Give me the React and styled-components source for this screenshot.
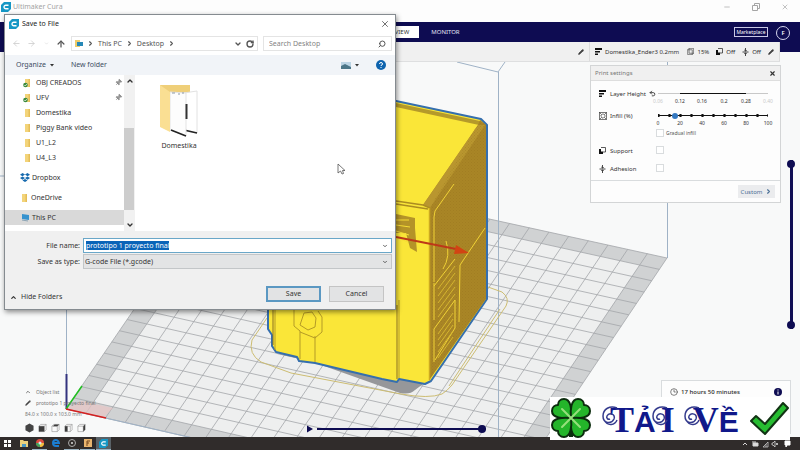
import React, { useEffect, useRef } from "react";
import styled, { createGlobalStyle, css } from "styled-components";
import {
  ArrowLeft, ArrowRight, ArrowUp, ChevronRight, ChevronDown, ChevronUp, RotateCw,
  Search, X, Minus, Pencil, Undo2, Clock3, Pin,
} from "lucide-react";

const navy = "#0e0c52";
const uiFont = '"Noto Sans", "Open Sans", sans-serif';

const GlobalStyle = createGlobalStyle`
  * { box-sizing: border-box; }
  body { margin: 0; background: #f8f9f9; font-family: ${uiFont}; color: #333; }
  button, input, select { font: inherit; color: inherit; margin: 0; padding: 0; }
  button { cursor: pointer; }
  svg { display: block; flex: none; }
`;

const Page = styled.div`
  position: relative;
  display: flex;
  flex-direction: column;
  min-height: 100vh;
  overflow: hidden;
  font-size: 6px;
  line-height: 8px;
`;

/* ---------- application window ---------- */
const TitleBar = styled.header`
  display: flex;
  align-items: flex-start;
  gap: 2px;
  height: 22px;
  padding: 2px 9px 0 1px;
  background: #fdfdfd;
  color: #a3a3a3;
  font-size: 7px;
  line-height: 10px;
`;
const AppName = styled.span`flex: 1;`;
const WindowButton = styled.button`
  width: 10px;
  height: 10px;
  margin-left: 17px;
  border: 0;
  background: none;
  color: #a5a5a5;
`;
const NavBar = styled.nav`
  display: flex;
  align-items: flex-start;
  justify-content: flex-end;
  height: 30px;
  padding: 4px 10px 0 0;
  background: ${navy};
`;
const Tabs = styled.div`
  flex: 1;
  display: flex;
  padding-left: 374px;
  gap: 12px;
`;
const Tab = styled.button`
  height: 12px;
  padding: 0 ${(p) => (p.$active ? "10px" : "0")};
  border: 0;
  background: ${(p) => (p.$active ? "#fff" : "none")};
  color: ${(p) => (p.$active ? "#333" : "#e4e4f4")};
`;
const MarketButton = styled.button`
  height: 10px;
  margin: 1px 8px 0 0;
  width: 34px;
  border: 1px solid #c9c9e6;
  background: none;
  color: #fff;
  font-size: 5px;
  line-height: 8px;
`;
const Avatar = styled.button`
  width: 14px;
  height: 14px;
  border: 1px solid #d6d6ee;
  border-radius: 50%;
  background: none;
  color: #fff;
  font-weight: 600;
`;
const StageBar = styled.div`
  display: grid;
  grid-template-columns: 1fr 190px;
  height: 20px;
  margin: -10px 20px 0 4px;
  background: #f0f0f0;
  border-bottom: 1px solid #dedfe0;
`;
const StagePart = styled.div`
  display: flex;
  align-items: center;
  justify-content: flex-end;
  padding: 0 5px;
  border-right: 1px solid #dcdcdc;
`;
const Profile = styled.span`flex: 1; padding-left: 3px; white-space: nowrap;`;
const Stat = styled.span`
  display: flex;
  align-items: center;
  gap: 3px;
  margin-right: 7px;
  white-space: nowrap;
`;

/* ---------- workspace ---------- */
const Workspace = styled.main`
  position: relative;
  flex: 1;
  display: flex;
  flex-direction: column;
  justify-content: flex-end;
`;
const Scene = styled.svg`
  position: absolute;
  inset: 0;
  width: 100%;
  height: 100%;
`;
const Settings = styled.section`
  position: absolute;
  top: 3px;
  right: 19px;
  width: 191px;
  background: #fdfdfd;
  border: 1px solid #d3d5d6;
`;
const SettingsHead = styled.div`
  display: flex;
  justify-content: space-between;
  align-items: center;
  height: 15px;
  padding: 0 4px;
  background: #f0f0f0;
  border-bottom: 1px solid #dedede;
  color: #777;
`;
const IconButton = styled.button`
  display: grid;
  place-items: center;
  border: 0;
  background: none;
`;
const SettingsBody = styled.div`
  display: flex;
  flex-direction: column;
  padding: 8px 8px 6px;
`;
const SettingRow = styled.div`
  display: grid;
  grid-template-columns: 11px 46px 1fr;
  align-items: start;
  min-height: ${(p) => p.$h}px;
`;
const SettingLabel = styled.label`
  display: flex;
  align-items: center;
  gap: 3px;
  height: 9px;
  white-space: nowrap;
`;
const SettingIcon = styled.span`
  display: flex;
  align-items: center;
  height: 9px;
`;
const SliderBox = styled.div`
  display: flex;
  flex-direction: column;
  width: 114px;
`;
const Range = styled.input`
  appearance: none;
  width: 110px;
  height: 9px;
  margin: 0 2px;
  background:
    radial-gradient(circle at center, ${(p) => (p.$dots ? "#111" : "transparent")} 1px, transparent 2px) -5px 0 / 11px 9px,
    linear-gradient(${(p) => p.$line}) center / 100% 1px no-repeat;
  &::-webkit-slider-thumb {
    appearance: none;
    width: 6px;
    height: 6px;
    border-radius: 50%;
    background: ${(p) => p.$thumb};
  }
`;
const Ticks = styled.div`
  display: flex;
  justify-content: space-between;
  height: 8px;
  margin: 0 -4px;
  font-size: 5px;
  line-height: 6px;
  span { width: 12px; text-align: center; }
`;
const Faint = styled.span`color: #c9c9c9;`;
const CheckLabel = styled.label`
  display: flex;
  align-items: center;
  gap: 2px;
  height: 9px;
  font-size: 5px;
  color: #555;
`;
const Check = styled.input`
  appearance: none;
  width: 8px;
  height: 8px;
  border: 1px solid #d9dcde;
  background: #fff;
`;
const SettingsFoot = styled.div`
  display: flex;
  justify-content: flex-end;
  padding: 4px 5px;
  border-top: 1px solid #d9dcde;
`;
const CustomButton = styled.button`
  display: flex;
  align-items: center;
  justify-content: center;
  gap: 3px;
  width: 37px;
  height: 13px;
  border: 0;
  background: #ebecee;
  color: #4c7197;
`;
const LayerSlider = styled.div`
  position: absolute;
  top: 98px;
  right: 5px;
  display: flex;
  input {
    appearance: none;
    writing-mode: vertical-lr;
    direction: rtl;
    width: 8px;
    height: 169px;
    background: linear-gradient(${navy}, ${navy}) center / 3px 100% no-repeat;
  }
  input::-webkit-slider-thumb {
    appearance: none;
    width: 8px;
    height: 8px;
    border-radius: 50%;
    background: ${navy};
  }
  &::after {
    content: "";
    position: absolute;
    bottom: 0;
    width: 8px;
    height: 8px;
    border-radius: 50%;
    background: ${navy};
  }
`;
const ObjectInfo = styled.div`
  position: relative;
  display: flex;
  flex-direction: column;
  gap: 3px;
  padding: 0 0 4px 25px;
  color: #777;
  font-size: 5px;
`;
const InfoLine = styled.div`
  display: flex;
  align-items: center;
  gap: ${(p) => p.$gap || 5}px;
  height: 8px;
`;
const ViewIcons = styled(InfoLine)`
  height: 10px;
  margin-top: 2px;
`;
const PlayBar = styled.div`
  position: absolute;
  left: 306px;
  bottom: 4px;
  display: flex;
  align-items: center;
  gap: 4px;
  width: 180px;
  input {
    appearance: none;
    flex: 1;
    height: 8px;
    background: linear-gradient(${navy}, ${navy}) center / 100% 2px no-repeat;
  }
  input::-webkit-slider-thumb {
    appearance: none;
    width: 8px;
    height: 8px;
    border-radius: 50%;
    background: ${navy};
  }
`;
const TimeCard = styled.section`
  position: absolute;
  right: 9px;
  bottom: 3px;
  display: flex;
  align-items: flex-start;
  gap: 3px;
  width: 130px;
  height: 54px;
  padding: 7px 8px;
  background: #fdfdfd;
  border: 1px solid #d9dcde;
`;
const TimeText = styled.strong`
  flex: 1;
  font-family: "Open Sans", sans-serif;
  font-weight: 600;
`;

/* ---------- save dialog ---------- */
const Dialog = styled.form`
  position: absolute;
  top: 14px;
  left: 4px;
  width: 392px;
  border: 1px solid #858b90;
  background: #fff;
  box-shadow: 1px 2px 5px rgba(0, 0, 0, 0.45);
  font-size: 7px;
  line-height: 10px;
  color: #333;
`;
const DialogTitle = styled.div`
  display: flex;
  align-items: center;
  gap: 3px;
  height: 18px;
  padding: 0 5px 0 4px;
  h1 { flex: 1; margin: 0; font-size: 7px; font-weight: 400; color: #222; }
`;
const PathRow = styled.div`
  display: flex;
  align-items: center;
  gap: 5px;
  height: 22px;
  padding: 0 3px 1px 6px;
  color: #555;
`;
const ArrowButton = styled(IconButton)`
  width: 10px;
  color: ${(p) => (p.$dim ? "#c8c8c8" : "#555")};
`;
const Address = styled.div`
  flex: 1;
  display: flex;
  align-items: center;
  gap: 4px;
  height: 15px;
  padding: 0 3px;
  border: 1px solid #e4e4e4;
`;
const Spacer = styled.span`flex: 1;`;
const SearchBox = styled.label`
  display: flex;
  align-items: center;
  width: 129px;
  height: 15px;
  padding: 0 5px;
  border: 1px solid #e4e4e4;
  input { flex: 1; min-width: 0; border: 0; outline: 0; background: none; }
  input::placeholder { color: #838383; opacity: 1; }
`;
const ToolRow = styled.div`
  display: flex;
  align-items: center;
  gap: 17px;
  height: 20px;
  padding: 0 9px 0 11px;
  background: #f1f4f8;
  color: #3c4c63;
`;
const TextButton = styled.button`
  display: flex;
  align-items: center;
  gap: 4px;
  border: 0;
  background: none;
`;
const Browser = styled.div`
  display: grid;
  grid-template-columns: 119px 11px 1fr;
  height: 156px;
`;
const Tree = styled.ul`
  margin: 0;
  padding: 0;
  list-style: none;
`;
const TreeItem = styled.li`
  display: flex;
  align-items: center;
  gap: ${(p) => (p.$top ? 2 : 4)}px;
  height: 15px;
  padding-left: ${(p) => (p.$top ? 15 : 18)}px;
  padding-right: 2px;
  margin-top: ${(p) => (p.$top ? 5 : 0)}px;
  white-space: nowrap;
  ${(p) => p.$selected && css`background: #d9d9d9;`}
  span { flex: 1; }
`;
const ScrollBar = styled.div`
  display: flex;
  flex-direction: column;
  align-items: center;
  justify-content: space-between;
  padding: 2px 0;
  background: linear-gradient(#cdcdcd, #cdcdcd) 0 53px / 10px 82px no-repeat #f1f1f1;
`;
const Files = styled.div`padding: 9px 21px;`;
const FileTile = styled.figure`
  display: flex;
  flex-direction: column;
  align-items: center;
  gap: 3px;
  width: 46px;
  margin: 0;
`;
const DialogFoot = styled.div`
  padding: 7px 3px 7px 0;
  background: #f0f0f0;
`;
const Fields = styled.div`
  display: grid;
  grid-template-columns: 75px 1fr;
  column-gap: 3px;
  label { text-align: right; line-height: 16px; }
`;
const Combo = styled.div`
  display: flex;
  align-items: center;
  height: 15px;
  padding: 0 3px 0 2px;
  border: 1px solid ${(p) => (p.$focus ? "#6aa7c8" : "#c3c6c8")};
  background: ${(p) => (p.$focus ? "#fff" : "#e3e4e5")};
  input, select {
    flex: 1;
    min-width: 0;
    height: 12px;
    border: 0;
    outline: 0;
    background: none;
    appearance: none;
  }
  select { padding-left: 0; margin-left: -1px; }
  input::selection { background: #0a64b8; color: #fff; }
`;
const Actions = styled.div`
  display: flex;
  align-items: flex-end;
  gap: 8px;
  margin-top: 16px;
  padding: 0 8px 0 5px;
`;
const DialogButton = styled.button`
  width: 55px;
  height: 16px;
  border: ${(p) => (p.$primary ? "2px solid #5b98c2" : "1px solid #c4c4c4")};
  background: #e2e3e4;
  line-height: 10px;
`;
const Cursor = styled.svg`
  position: absolute;
  left: 337px;
  top: 163px;
`;

/* ---------- taskbar and banner ---------- */
const TaskBar = styled.footer`
  display: flex;
  align-items: center;
  gap: 1px;
  height: 13px;
  background: #302c2b;
  padding-right: 9px;
`;
const Task = styled.button`
  display: grid;
  place-items: center;
  width: 15px;
  height: 13px;
  border: 0;
  border-bottom: 1px solid ${(p) => (p.$open ? "#9ab4c4" : "transparent")};
  background: ${(p) => (p.$active ? "#596166" : "none")};
`;
const Banner = styled.div`
  position: absolute;
  right: 10px;
  bottom: 10px;
  display: flex;
  align-items: center;
  justify-content: space-between;
  width: 240px;
  height: 43px;
  padding: 0 1px;
  background: #fff;
`;
const BannerText = styled.div`
  position: relative;
  display: flex;
  align-items: baseline;
  gap: 18px;
  flex: 1;
  min-width: 0;
  padding: 4px 0 0 19px;
  color: #10188a;
  font: bold 30px/40px "Liberation Sans", sans-serif;
  b { font: bold 36px/40px "Liberation Serif", serif; }
`;
const Word = styled.span`
  display: flex;
  align-items: baseline;
  i { width: 5px; }
`;
const Swash = styled.svg`
  position: absolute;
  left: 10px;
  top: 4px;
`;

/* ---------- drawings ---------- */
function CuraLogo({ size = 10 }) {
  return (
    <svg width={size} height={size} viewBox="0 0 20 20">
      <path d="M6 0h14v14l-6 6H0V6z" fill="#1597c5" />
      <path d="M15 6.500H9.500a3.500 3.500 0 0 0 0 7H15" fill="none" stroke="#fff" strokeWidth="2.600" />
    </svg>
  );
}
function LayersIcon() {
  return <svg width="7" height="7" viewBox="0 0 7 7"><path d="M0 0h7v2H0zM0 3h5v1.500H0zM0 5.500h3V7H0z" fill="#111" /></svg>;
}
function InfillIcon({ size = 8, crossed = true }) {
  return (
    <svg width={size} height={size} viewBox="0 0 10 10" fill="none" stroke="#444" strokeWidth="0.900">
      {crossed
        ? <><rect x="0.500" y="0.500" width="9" height="9" /><path d="M.5.5l3 3M9.500.5l-3 3M.5 9.500l3-3M9.500 9.500l-3-3M5 2l3 3-3 3-3-3z" /></>
        : <path d="M1 2.500h6.500V9.500H1zM1 2.500L3 .5h6.500v7l-2 2M3 .5v7M3 7.500h6.500" />}
    </svg>
  );
}
function SupportIcon() {
  return (
    <svg width="7" height="7" viewBox="0 0 7 7">
      <path d="M2 .5h4.500V5H4" fill="none" stroke="#333" strokeWidth=".8" />
      <path d="M0 2h2v2.500h2V7H0z" fill="#111" />
    </svg>
  );
}
function AdhesionIcon() {
  return <svg width="7" height="8" viewBox="0 0 7 8" fill="none" stroke="#333" strokeWidth=".9"><path d="M3.500 0v3M2.300 2l1.200 1.200L4.700 2M.5 4h6M3.500 8V5M2.300 6l1.200-1.200L4.700 6" /></svg>;
}
function FolderIcon({ synced }) {
  return (
    <svg width="9" height="10" viewBox="0 0 9 10">
      <path d="M2 1h5v8H2z" fill="#f3d47a" /><path d="M5.500 1H7v8H5.500z" fill="#e5bd58" />
      {synced && <><circle cx="2.500" cy="7" r="2.300" fill="#3a8a3c" /><path d="M1.300 7l1 1 1.500-2" stroke="#fff" strokeWidth=".7" fill="none" /></>}
    </svg>
  );
}
function DropboxIcon() {
  return <svg width="10" height="9" viewBox="0 0 20 18"><path d="M5 0l5 3-5 3.500L0 3.500zM15 0l5 3.500-5 3L10 3zM5 7l5 3-5 3.500L0 10zM15 7l5 3-5 3.500L10 10zM10 12l5 3-5 3-5-3z" fill="#176aae" /></svg>;
}
function PcIcon() {
  return <svg width="10" height="9" viewBox="0 0 10 9"><path d="M2 1l7 1v5L2 6z" fill="#3793ce" /><path d="M2 7l6 1" stroke="#8ba4b5" /></svg>;
}
function OpenFolder() {
  return (
    <svg width="42" height="54" viewBox="0 0 42 54">
      <path d="M2 1h30v40H2z" fill="#efcf79" />
      <path d="M19 10l20-3v42l-18-3z" fill="#fff" stroke="#e2e2e2" />
      <path d="M26 46l13 3" stroke="#222" strokeWidth="1.500" />
      <path d="M12 8l16 1v43l-16-6z" fill="#fdfdfd" stroke="#e3e3e3" />
      <path d="M13 46l15 6" stroke="#222" strokeWidth="1.500" />
      <path d="M28.500 20v15" stroke="#333" strokeWidth="2" />
      <path d="M14 9h3M20 10h2M24 9h2" stroke="#8d99a5" />
      <path d="M2 1l10 7v40L2 43z" fill="#fadf93" />
    </svg>
  );
}
function CubeIcon({ side }) {
  const faces = { top: "M2 3l2-2h5L7 3z", left: "M1 3h3v6H1z", right: "M7 3l2-2v6L7 9z", front: "M1 3h6v6H1z" };
  return (
    <svg width="9" height="10" viewBox="0 0 10 10">
      {side === "all"
        ? <path d="M5 0l4.500 2.500v5L5 10 .5 7.500v-5z" fill="#444" />
        : <><path d="M1 3h6v6H1zM1 3l2-2h6v6L7 9M7 3l2-2" fill="#fafafa" stroke="#888" strokeWidth=".6" /><path d={faces[side]} fill="#3d3d3d" /></>}
    </svg>
  );
}

const plate = { left: [66, 409], back: [234, 163], right: [667, 258], front: [499, 508] };
const CELLS = 22;
function at(u, v) {
  const mix = (i) =>
    (1 - u) * (1 - v) * plate.left[i] + (1 - u) * v * plate.back[i] + u * (1 - v) * plate.front[i] + u * v * plate.right[i];
  return `${mix(0)} ${mix(1)}`;
}
function quad(a, b) {
  return `M${at(a, a)}L${at(a, b)}L${at(b, b)}L${at(b, a)}z`;
}
function gridPath() {
  let d = "";
  for (let i = 0; i <= CELLS; i += 1) {
    const t = i / CELLS;
    d += `M${at(t, 0)}L${at(t, 1)}M${at(0, t)}L${at(1, t)}`;
  }
  return d;
}

function PrintScene() {
  return (
    <Scene viewBox="0 62 800 375" preserveAspectRatio="xMidYMid slice" aria-hidden="true">
      <defs>
        <pattern id="weave" width="3" height="3" patternUnits="userSpaceOnUse">
          <path d="M0 0h1v1H0zM1.500 1.500h1v1h-1z" fill="#8f6d17" opacity=".3" />
        </pattern>
      </defs>
      <path d={quad(0, 1)} fill="#d0d2d3" />
      <path d={quad(1 / CELLS, 1 - 1 / CELLS)} fill="#eeefef" />
      <path d={gridPath()} stroke="#a3a6aa" strokeWidth=".8" fill="none" />
      <g fill="none" stroke="#9fb2c6" strokeWidth="1">
        <path d="M66.500 62V375M667.500 62V258M457 62l41 10 7-10M498.500 72V437M0 176h5" />
        <path d="M66 409L499 508" />
      </g>
      <path d="M66 409l38 8 9-9-32-7z" fill="#e8c4c4" opacity=".7" />
      <path d="M66.500 374v35" stroke="#33337e" strokeWidth="2" />
      <path d="M66 409l16-23" stroke="#20c020" strokeWidth="1.500" />
      <path d="M66 409l40 9" stroke="#d52020" strokeWidth="1.500" />
      <path d="M310 361l90 32q10 2 15-3l12-9-60-20-90-7z" fill="#96979a" />
      <g fill="none" stroke="#cdbd72" strokeWidth="1">
        <path d="M267 318l-15 22q-4 14 9 22l30 11 110 21q28 5 41 0 5-3 10-9l54-79q4-8-4-14l-14-5" />
        <path d="M449 386l51-77" />
      </g>
      <path d="M396 101l85 18 6 6v174l-56 82-6 3-26-5-2 3-15-3-67-16-16-2-2-4-21-5-4-6v-11l-4-6V101z" fill="#fae638" stroke="#356fae" strokeWidth="2" strokeLinejoin="round" />
      <path d="M396 103l84 18-1 4-83-18z" fill="#b59a2a" />
      <path d="M480 120l6 5v174l-56 80-1-172-6-2 55-80z" fill="#a98526" />
      <path d="M478 125l-55 80 7 3 55-83z" fill="#b9962f" />
      <path d="M480 120l6 5v174l-56 80V207z" fill="url(#weave)" />
      <path d="M396 201l27 4 7 3M396 204l32 5" stroke="#ac8c20" strokeWidth="1.500" fill="none" />
      <path d="M396 214l19 4v10l2 24-7-4-4-15h-10z" fill="#b49328" />
      <path d="M396 220h13M396 225l14 2M396 231l13 4M396 237l12 5" stroke="#f5dc35" strokeWidth="1" />
      <path d="M429.500 208V380" stroke="#cda920" strokeWidth="1.500" />
      <g fill="none" stroke="#f0d236" strokeWidth="1">
        <path d="M454 184l-19 27-1 6v65M446 241q5 15-3 28M485 228l-25 37-1 57M434 283v37M434 286l21-27M434 362v-33l21-29v28l-20 32" />
      </g>
      <g fill="none" stroke="#d5b52f" strokeWidth="1">
        <path d="M438 289l17-23M438 296l17-23M438 303l17-23M438 310l17-23M438 317l17-23M438 334l15-21M438 340l15-21M438 346l15-21M438 352l15-21M438 358l15-21" />
      </g>
      <g fill="none" stroke="#b49b26" strokeWidth="1">
        <path d="M275 309v41M399 300v78M300 331v28M315 336v26M294 309v17l6 5M318 311l4 6v15l-7 6-15-6" />
        <path d="M304 313l8-1 4 6-1 9-7 3-8-5z" />
      </g>
      <path d="M397 305v74M273 309v36" stroke="#897122" strokeWidth="1" />
      <path d="M396 237l60 12" stroke="#bd3818" strokeWidth="2" />
      <path d="M456 245l13 8-15 1z" fill="#d24413" />
    </Scene>
  );
}

function Clover() {
  return (
    <svg width="40" height="41" viewBox="0 0 40 41">
      <path d="M20 22v17" stroke="#0b2c0d" strokeWidth="4" />
      <g fill="#24b52a" stroke="#0b2c0d" strokeWidth="2" strokeLinejoin="round">
        {[0, 90, 180, 270].map((a) => (
          <path key={a} transform={`rotate(${a} 20 20)`} d="M20 20C12 21 1 20 1 13c0-4 3-6 6-6 0-3 2-6 6-6 7 0 8 11 7 19z" />
        ))}
      </g>
      <path d="M20 20L11 11M20 20l9-9M20 20l-9 9M20 20l9 9" stroke="#96e07c" strokeWidth="2" strokeLinecap="round" />
    </svg>
  );
}
function Flourishes() {
  const curl = "M15 5C8 2 1 6 1 13s8 9 11 3c2-5-5-7-7-3-1 2 1 4 3 3M2 17c4 7 11 5 13 0";
  return (
    <Swash width="126" height="36" viewBox="0 0 126 36" fill="none" stroke="#343b8d" strokeWidth="1.500">
      <path d={curl} transform="translate(1 3)" />
      <path d={curl} transform="translate(51 3)" />
      <path d={curl} transform="translate(83 3)" />
    </Swash>
  );
}
function BigCheck() {
  return <svg width="39" height="34" viewBox="0 0 39 34"><path d="M1 19l5-5 9 8L33 1l5 5-23 26z" fill="#27bd31" stroke="#123414" strokeWidth="2" strokeLinejoin="round" /></svg>;
}

/* ---------- sections ---------- */
function PrintSettings() {
  return (
    <Settings>
      <SettingsHead>Print settings<IconButton aria-label="Close settings"><X size={7} color="#333" strokeWidth={4} /></IconButton></SettingsHead>
      <SettingsBody>
        <SettingRow $h={22}>
          <SettingIcon><LayersIcon /></SettingIcon>
          <SettingLabel htmlFor="layer">Layer Height <Undo2 size={7} color="#333" strokeWidth={3} /></SettingLabel>
          <SliderBox>
            <Range id="layer" type="range" $line="to right, #c8c8c8 20%, #111 20%, #111 80%, #c8c8c8 80%" $thumb="transparent" />
            <Ticks><Faint>0.06</Faint><span>0.12</span><span>0.16</span><span>0.2</span><span>0.28</span><Faint>0.40</Faint></Ticks>
          </SliderBox>
        </SettingRow>
        <SettingRow $h={35}>
          <SettingIcon><InfillIcon /></SettingIcon>
          <SettingLabel htmlFor="infill">Infill (%)</SettingLabel>
          <SliderBox>
            <Range id="infill" type="range" defaultValue="13" $dots $line="#111, #111" $thumb="#3478c0" />
            <Ticks>{[0, 20, 40, 60, 80, 100].map((n) => <span key={n}>{n}</span>)}</Ticks>
            <CheckLabel><Check type="checkbox" />Gradual infill</CheckLabel>
          </SliderBox>
        </SettingRow>
        <SettingRow $h={18}>
          <SettingIcon><SupportIcon /></SettingIcon>
          <SettingLabel htmlFor="support">Support</SettingLabel>
          <SliderBox><Check id="support" type="checkbox" /></SliderBox>
        </SettingRow>
        <SettingRow $h={10}>
          <SettingIcon><AdhesionIcon /></SettingIcon>
          <SettingLabel htmlFor="adhesion">Adhesion</SettingLabel>
          <SliderBox><Check id="adhesion" type="checkbox" /></SliderBox>
        </SettingRow>
      </SettingsBody>
      <SettingsFoot><CustomButton>Custom <ChevronRight size={7} strokeWidth={4} /></CustomButton></SettingsFoot>
    </Settings>
  );
}

function SaveDialog() {
  const nameRef = useRef(null);
  useEffect(() => {
    nameRef.current.focus({ preventScroll: true });
    nameRef.current.select();
  }, []);
  return (
    <Dialog role="dialog" aria-label="Save to File" onSubmit={(e) => e.preventDefault()}>
      <DialogTitle>
        <CuraLogo /><h1>Save to File</h1>
        <IconButton type="button" aria-label="Close"><X size={10} color="#555" strokeWidth={2} /></IconButton>
      </DialogTitle>
      <PathRow>
        <ArrowButton type="button" $dim aria-label="Back"><ArrowLeft size={9} /></ArrowButton>
        <ArrowButton type="button" $dim aria-label="Forward"><ArrowRight size={9} /></ArrowButton>
        <ArrowButton type="button" $dim aria-label="Recent"><ChevronDown size={5} /></ArrowButton>
        <ArrowButton type="button" aria-label="Up"><ArrowUp size={10} strokeWidth={3} /></ArrowButton>
        <Address>
          <svg width="8" height="9" viewBox="0 0 8 9"><path d="M0 1h5v7H0z" fill="#edcc6c" /><path d="M2 3h6v4H2z" fill="#2688b7" /></svg>
          <ChevronRight size={7} strokeWidth={4} />This PC
          <ChevronRight size={7} strokeWidth={4} />Desktop
          <ChevronRight size={7} strokeWidth={4} /><Spacer />
          <ChevronDown size={8} strokeWidth={4} /><RotateCw size={8} strokeWidth={4} />
        </Address>
        <SearchBox><input aria-label="Search Desktop" placeholder="Search Desktop" /><Search size={8} strokeWidth={3} transform="scale(-1 1)" /></SearchBox>
      </PathRow>
      <ToolRow>
        <TextButton type="button">Organize <svg width="4" height="3"><path d="M0 0h4L2 2.500z" fill="#333" /></svg></TextButton>
        <TextButton type="button">New folder</TextButton>
        <Spacer />
        <TextButton type="button" aria-label="View">
          <svg width="10" height="7" viewBox="0 0 10 7"><path d="M0 0h10v7H0z" fill="#bcd4e4" /><path d="M0 4l4-2 6 3v2H0z" fill="#4b7688" /></svg>
          <svg width="4" height="3"><path d="M0 0h4L2 2.500z" fill="#333" /></svg>
        </TextButton>
        <TextButton type="button" aria-label="Help">
          <svg width="10" height="10" viewBox="0 0 10 10"><circle cx="5" cy="5" r="5" fill="#0d63ae" /><path d="M3.500 4q0-1.500 1.500-1.500T6.500 4Q6.500 5 5 5.500V6M5 7v1" stroke="#fff" fill="none" /></svg>
        </TextButton>
      </ToolRow>
      <Browser>
        <Tree>
          {["OBJ CREADOS", "UFV"].map((n) => <TreeItem key={n}><FolderIcon synced /><span>{n}</span><Pin size={7} color="#777" fill="#999" transform="rotate(45)" /></TreeItem>)}
          {["Domestika", "Piggy Bank video", "U1_L2", "U4_L3"].map((n) => <TreeItem key={n}><FolderIcon /><span>{n}</span></TreeItem>)}
          <TreeItem $top><DropboxIcon /><span>Dropbox</span></TreeItem>
          <TreeItem $top><FolderIcon /><span>OneDrive</span></TreeItem>
          <TreeItem $top $selected><PcIcon /><span>This PC</span></TreeItem>
        </Tree>
        <ScrollBar><ChevronUp size={8} strokeWidth={4} /><ChevronDown size={8} strokeWidth={4} /></ScrollBar>
        <Files><FileTile><OpenFolder /><figcaption>Domestika</figcaption></FileTile></Files>
      </Browser>
      <DialogFoot>
        <Fields>
          <label htmlFor="fname">File name:</label>
          <Combo $focus><input id="fname" ref={nameRef} defaultValue="prototipo 1 proyecto final" /><ChevronDown size={6} strokeWidth={3} /></Combo>
          <label htmlFor="ftype">Save as type:</label>
          <Combo><select id="ftype"><option>G-code File (*.gcode)</option></select><ChevronDown size={6} strokeWidth={3} /></Combo>
        </Fields>
        <Actions>
          <TextButton type="button"><ChevronUp size={7} strokeWidth={4} />Hide Folders</TextButton>
          <Spacer />
          <DialogButton $primary>Save</DialogButton>
          <DialogButton type="button">Cancel</DialogButton>
        </Actions>
      </DialogFoot>
    </Dialog>
  );
}

function Tasks() {
  return (
    <TaskBar>
      <Task aria-label="Start"><svg width="7" height="7"><path d="M0 0h3v3H0zM4 0h3v3H4zM0 4h3v3H0zM4 4h3v3H4z" fill="#fff" /></svg></Task>
      <Task aria-label="Files"><svg width="8" height="7"><path d="M0 0h3l1 1h4v6H0z" fill="#ecd27c" /><path d="M2 4h4v3H2z" fill="#4c9ac4" /></svg></Task>
      <Task $open aria-label="Chrome"><svg width="8" height="8"><circle cx="4" cy="4" r="4" fill="#dc4b3e" /><path d="M0 4a4 4 0 0 0 4 4V4z" fill="#41a55a" /><path d="M4 8a4 4 0 0 0 4-4H4z" fill="#efc13e" /><circle cx="4" cy="4" r="1.500" fill="#dce9f5" /></svg></Task>
      <Task aria-label="Edge"><svg width="8" height="8" fill="none" stroke="#1c7dd0" strokeWidth="2"><path d="M1 4h6Q6 1 4 1 1 1 1 4t3 3h3" /></svg></Task>
      <Task $open aria-label="Recorder"><svg width="8" height="8"><circle cx="4" cy="4" r="3.500" fill="none" stroke="#aaa" /><circle cx="4" cy="4" r="1" fill="#ddd" /></svg></Task>
      <Task $open aria-label="Printer"><svg width="8" height="8"><path d="M0 0h8v8H0z" fill="#e9b56e" /><path d="M3 7V2h3M3 4h2" stroke="#70441f" fill="none" /></svg></Task>
      <Task $open $active aria-label="Cura"><CuraLogo size={9} /></Task>
      <Spacer />
      <svg width="48" height="8" fill="none" stroke="#d7d7d7">
        <path d="M0 5l2-2 2 2" /><path d="M10 3h5v3h-5zM9 2h4" fill="#ddd" />
        <path d="M20 7l5-5v5zM23 7V4" strokeWidth=".7" /><path d="M29 3h1l2-2v6l-2-2h-1zM33 3l2 2M35 3l-2 2" strokeWidth=".8" />
        <path d="M42 1h5v4h-3l-1 2V5h-1z" fill="#fff" stroke="#fff" />
      </svg>
    </TaskBar>
  );
}

export default function App() {
  return (
    <>
      <GlobalStyle />
      <Page>
        <TitleBar>
          <CuraLogo /><AppName>Ultimaker Cura</AppName>
          <WindowButton aria-label="Minimize"><Minus size={8} /></WindowButton>
          <WindowButton aria-label="Restore"><svg width="8" height="8" fill="none" stroke="currentColor"><path d="M.5 2.500h5v5h-5zM2.500 2V.5h5v5H6" /></svg></WindowButton>
          <WindowButton aria-label="Close window"><X size={8} /></WindowButton>
        </TitleBar>
        <NavBar>
          <Tabs><Tab $active>PREVIEW</Tab><Tab>MONITOR</Tab></Tabs>
          <MarketButton>Marketplace</MarketButton>
          <Avatar>F</Avatar>
        </NavBar>
        <StageBar>
          <StagePart><Pencil size={6} fill="#444" /></StagePart>
          <StagePart>
            <LayersIcon /><Profile>Domestika_Ender3 0.2mm</Profile>
            <Stat><InfillIcon size={7} crossed={false} />15%</Stat>
            <Stat><SupportIcon />Off</Stat>
            <Stat><AdhesionIcon />Off</Stat>
            <Pencil size={6} fill="#444" />
          </StagePart>
        </StageBar>
        <Workspace>
          <PrintScene />
          <PrintSettings />
          <LayerSlider><input type="range" aria-label="Layer" defaultValue="100" /></LayerSlider>
          <ObjectInfo>
            <InfoLine $gap={5}><ChevronUp size={6} strokeWidth={4} />Object list</InfoLine>
            <InfoLine $gap={5}><Pencil size={6} fill="#444" />prototipo 1 proyecto final</InfoLine>
            <InfoLine>84.0 x 100.0 x 103.0 mm</InfoLine>
            <ViewIcons $gap={4}>{["all", "front", "top", "left", "right"].map((s) => <CubeIcon key={s} side={s} />)}</ViewIcons>
          </ObjectInfo>
          <PlayBar>
            <IconButton aria-label="Play"><svg width="7" height="8"><path d="M1 0.500v7L7 4z" fill={navy} /></svg></IconButton>
            <input type="range" aria-label="Path" defaultValue="100" />
          </PlayBar>
          <TimeCard>
            <Clock3 size={8} color="#444" /><TimeText>17 hours 50 minutes</TimeText>
            <svg width="8" height="8"><circle cx="4" cy="4" r="4" fill={navy} /><path d="M4 1.500v1M4 3.500v3" stroke="#fff" /></svg>
          </TimeCard>
        </Workspace>
        <Tasks />
        <SaveDialog />
        <Cursor width="9" height="12" viewBox="0 0 9 12"><path d="M1 1v9l2.500-2L5 11l1.500-.5L5.500 7.500H8z" fill="#fff" stroke="#555" strokeWidth=".8" /></Cursor>
        <Banner>
          <Clover />
          <BannerText>
            <Flourishes />
            <Word><b>T</b>Ả<i /><b>I</b></Word>
            <Word><b>V</b>Ề</Word>
          </BannerText>
          <BigCheck />
        </Banner>
      </Page>
    </>
  );
}
